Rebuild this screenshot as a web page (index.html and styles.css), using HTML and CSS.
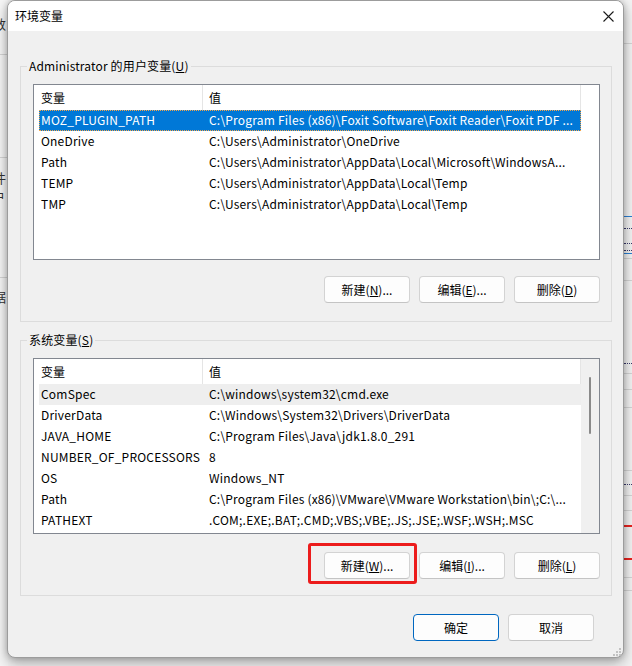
FILE: index.html
```html
<!DOCTYPE html>
<html lang="zh-CN">
<head>
<meta charset="utf-8">
<title>环境变量</title>
<link rel="stylesheet" href="styles.css">
</head>
<body>
<div class="screen">
  <div class="backdrop">
    <div class="bg-left">
      <span class="frag frag-a">数</span>
      <span class="frag frag-c">文件</span>
      <span class="frag frag-d">户</span>
      <span class="frag frag-e">据</span>
      <i class="bg-line l-54"></i>
      <i class="bg-line l-157"></i>
      <i class="bg-line l-277"></i>
    </div>
    <div class="bg-right">
      <i class="bg-line r-43"></i>
      <i class="blue r-216"></i>
      <i class="dots r-228"></i>
      <i class="dots r-243"></i>
      <i class="dots r-250"></i>
      <i class="blue r-253"></i>
      <i class="bg-line r-258"></i>
      <i class="bg-line r-280"></i>
      <i class="dots r-363"></i>
      <i class="bg-line r-373"></i>
      <i class="bg-line r-389"></i>
      <i class="bg-line r-407"></i>
      <i class="bg-line r-470"></i>
      <i class="dots r-484"></i>
      <i class="bg-line r-495"></i>
      <i class="bg-line r-510"></i>
      <i class="red r-525"></i>
      <i class="red r-558"></i>
      <i class="bg-line r-577"></i>
      <i class="bg-line r-590"></i>
    </div>
  </div>

  <div class="dialog">
    <div class="titlebar">
      <span class="title">环境变量</span>
      <span class="close" aria-label="关闭">
        <svg width="11" height="11" viewBox="0 0 11 11"><path d="M0.5 0.5 L10.5 10.5 M10.5 0.5 L0.5 10.5" stroke="#1a1a1a" stroke-width="1.1" fill="none"/></svg>
      </span>
    </div>

    <div class="content">
      <fieldset class="group group-user">
        <legend>Administrator 的用户变量(<u>U</u>)</legend>
        <div class="listview">
          <div class="lv-main">
            <div class="lv-header">
              <div class="hcell hname">变量</div>
              <div class="hcell hvalue">值</div>
            </div>
            <div class="row selected"><span class="cname">MOZ_PLUGIN_PATH</span><span class="cvalue">C:\Program Files (x86)\Foxit Software\Foxit Reader\Foxit PDF ...</span></div>
            <div class="row"><span class="cname">OneDrive</span><span class="cvalue">C:\Users\Administrator\OneDrive</span></div>
            <div class="row"><span class="cname">Path</span><span class="cvalue">C:\Users\Administrator\AppData\Local\Microsoft\WindowsA...</span></div>
            <div class="row"><span class="cname">TEMP</span><span class="cvalue">C:\Users\Administrator\AppData\Local\Temp</span></div>
            <div class="row"><span class="cname">TMP</span><span class="cvalue">C:\Users\Administrator\AppData\Local\Temp</span></div>
          </div>
        </div>
        <div class="btn-row">
          <button class="btn">新建(<u>N</u>)...</button>
          <button class="btn">编辑(<u>E</u>)...</button>
          <button class="btn">删除(<u>D</u>)</button>
        </div>
      </fieldset>

      <fieldset class="group group-system">
        <legend>系统变量(<u>S</u>)</legend>
        <div class="listview">
          <div class="lv-main">
            <div class="lv-header">
              <div class="hcell hname">变量</div>
              <div class="hcell hvalue">值</div>
            </div>
            <div class="row hover"><span class="cname">ComSpec</span><span class="cvalue">C:\windows\system32\cmd.exe</span></div>
            <div class="row"><span class="cname">DriverData</span><span class="cvalue">C:\Windows\System32\Drivers\DriverData</span></div>
            <div class="row"><span class="cname">JAVA_HOME</span><span class="cvalue">C:\Program Files\Java\jdk1.8.0_291</span></div>
            <div class="row"><span class="cname">NUMBER_OF_PROCESSORS</span><span class="cvalue">8</span></div>
            <div class="row"><span class="cname">OS</span><span class="cvalue">Windows_NT</span></div>
            <div class="row"><span class="cname">Path</span><span class="cvalue">C:\Program Files (x86)\VMware\VMware Workstation\bin\;C:\...</span></div>
            <div class="row"><span class="cname">PATHEXT</span><span class="cvalue">.COM;.EXE;.BAT;.CMD;.VBS;.VBE;.JS;.JSE;.WSF;.WSH;.MSC</span></div>
          </div>
          <div class="lv-scroll"><div class="thumb"></div></div>
        </div>
        <div class="btn-row">
          <div class="annotated">
            <button class="btn">新建(<u>W</u>)...</button>
            <span class="highlight"></span>
          </div>
          <button class="btn">编辑(<u>I</u>)...</button>
          <button class="btn">删除(<u>L</u>)</button>
        </div>
      </fieldset>

      <div class="dialog-buttons">
        <button class="btn btn-default">确定</button>
        <button class="btn">取消</button>
      </div>
    </div>

    <svg class="grip" width="9" height="9" viewBox="0 0 9 9">
      <rect x="7" y="1" width="2" height="2" fill="#c2c2c2"/>
      <rect x="4" y="4" width="2" height="2" fill="#c2c2c2"/>
      <rect x="7" y="4" width="2" height="2" fill="#c2c2c2"/>
      <rect x="1" y="7" width="2" height="2" fill="#c2c2c2"/>
      <rect x="4" y="7" width="2" height="2" fill="#c2c2c2"/>
      <rect x="7" y="7" width="2" height="2" fill="#c2c2c2"/>
    </svg>
  </div>
</div>
</body>
</html>
```

FILE: styles.css
```css
* { box-sizing: border-box; }

html, body {
  margin: 0;
  padding: 0;
}

body {
  width: 632px;
  height: 666px;
  overflow: hidden;
  font-family: "Noto Sans CJK SC", "Noto Sans", sans-serif;
  font-size: 12px;
  line-height: 16px;
  color: #000;
  background: #ebebeb;
}

.screen {
  position: relative;
  width: 632px;
  height: 666px;
  overflow: hidden;
  background: #f3f3f3;
}

/* background windows peeking out behind the dialog */
.backdrop {
  position: absolute;
  inset: 0;
}

.bg-left {
  position: absolute;
  left: 0;
  top: 0;
  width: 8px;
  height: 666px;
  background: #f5f5f5;
  overflow: hidden;
}

.bg-right {
  position: absolute;
  right: 0;
  top: 0;
  width: 9px;
  height: 666px;
  background: #f2f2f2;
  overflow: hidden;
}

.frag {
  position: absolute;
  font-size: 13px;
  color: #333;
  white-space: nowrap;
}
.frag-a { top: 16px; left: -7px; }
.frag-c { top: 170px; left: -20px; }
.frag-d { top: 189px; left: -8px; }
.frag-e { top: 289px; left: -7px; }

.bg-line {
  position: absolute;
  left: 0;
  right: 0;
  height: 1px;
  background: #d4d4d4;
}
.blue {
  position: absolute;
  left: 0;
  right: 0;
  height: 1px;
  background: #2a7fd4;
}
.red {
  position: absolute;
  left: 0;
  right: 0;
  height: 2px;
  background: #e8231f;
}
.dots {
  position: absolute;
  left: 1px;
  right: 0;
  height: 1px;
  border-top: 1px dotted #3a3a6a;
}
.l-54 { top: 54px; }
.l-157 { top: 157px; }
.l-277 { top: 277px; }
.r-43 { top: 43px; }
.r-216 { top: 216px; }
.r-228 { top: 228px; }
.r-243 { top: 243px; }
.r-250 { top: 250px; }
.r-253 { top: 253px; }
.r-258 { top: 258px; }
.r-280 { top: 280px; }
.r-363 { top: 363px; }
.r-373 { top: 373px; }
.r-389 { top: 389px; }
.r-407 { top: 407px; }
.r-470 { top: 470px; }
.r-484 { top: 484px; }
.r-495 { top: 495px; }
.r-510 { top: 510px; }
.r-525 { top: 525px; }
.r-558 { top: 558px; }
.r-577 { top: 577px; }
.r-590 { top: 590px; }

/* dialog */
.dialog {
  position: relative;
  margin-left: 7px;
  width: 617px;
  height: 658px;
  background: #f0f0f0;
  border: 1px solid #9c9c9c;
  border-radius: 8px;
  box-shadow: 0 0 6px rgba(0, 0, 0, 0.22), 0 6px 14px rgba(0, 0, 0, 0.28);
  display: flex;
  flex-direction: column;
  overflow: hidden;
}

.titlebar {
  flex: none;
  height: 30px;
  background: #fff;
  display: flex;
  align-items: center;
  justify-content: space-between;
  padding-left: 7px;
  padding-right: 9px;
}

.title {
  font-size: 12px;
  line-height: 16px;
}

.close {
  display: flex;
  width: 11px;
  height: 11px;
}

.content {
  flex: 1;
  display: flex;
  flex-direction: column;
  padding: 27px 11px 0 12px;
}

.group {
  margin: 0;
  min-width: 0;
  border: 1px solid #dcdcdc;
  padding: 10px 11px 18px 12px;
}

.group-system {
  margin-top: 10px;
  padding-bottom: 16px;
}

.group legend {
  margin-left: -6px;
  padding: 0 2px;
  line-height: 16px;
  font-size: 12px;
  letter-spacing: 0.15px;
}

.listview {
  height: 176px;
  border: 1px solid #828790;
  background: #fff;
  display: flex;
  overflow: hidden;
}

.lv-main {
  width: 547px;
  flex: none;
  overflow: hidden;
}

.lv-header {
  display: flex;
  height: 25px;
}

.hcell {
  display: flex;
  align-items: center;
  height: 25px;
  border-right: 1px solid #e5e5e5;
}

.hname {
  width: 169px;
  padding-left: 7px;
}

.hvalue {
  flex: 1;
  padding-left: 6px;
}

.row {
  display: flex;
  align-items: center;
  height: 21px;
  margin-left: 5px;
  padding-bottom: 1px;
  white-space: nowrap;
  overflow: hidden;
  letter-spacing: 0.2px;
}

.cname {
  flex: none;
  width: 170px;
  padding-left: 2px;
}

.cvalue {
  flex: 1;
  overflow: hidden;
}

.row.selected {
  background: #0078d7;
  color: #fff;
  outline: 1px dotted #f5a64a;
  outline-offset: -1px;
}

.row.hover {
  background: #eeeeee;
}

.lv-scroll {
  flex: 1;
  background: #f0f0f0;
}

.thumb {
  width: 2px;
  height: 57px;
  margin: 18px 0 0 8px;
  background: #8a8a8a;
  border-radius: 1px;
}

.btn-row {
  display: flex;
  justify-content: flex-end;
  gap: 9px;
  margin-top: 16px;
}

.group-system .btn-row {
  margin-top: 18px;
}

.btn {
  width: 86px;
  height: 27px;
  margin: 0;
  padding: 0;
  display: flex;
  align-items: center;
  justify-content: center;
  font-family: inherit;
  font-size: 12px;
  line-height: 16px;
  color: #000;
  background: #fdfdfd;
  border: 1px solid #d3d3d3;
  border-bottom-color: #c4c4c4;
  border-radius: 4px;
}

.btn-default {
  border: 1px solid #0067c0;
}

.annotated {
  position: relative;
}

.highlight {
  position: absolute;
  left: -16px;
  top: -9px;
  width: 109px;
  height: 41px;
  border: 3px solid #ec1c1c;
  border-radius: 3px;
  pointer-events: none;
}

.dialog-buttons {
  display: flex;
  justify-content: flex-end;
  gap: 9px;
  margin-top: 18px;
  padding-right: 18px;
}

.grip {
  position: absolute;
  right: 2px;
  bottom: 1px;
}
```
